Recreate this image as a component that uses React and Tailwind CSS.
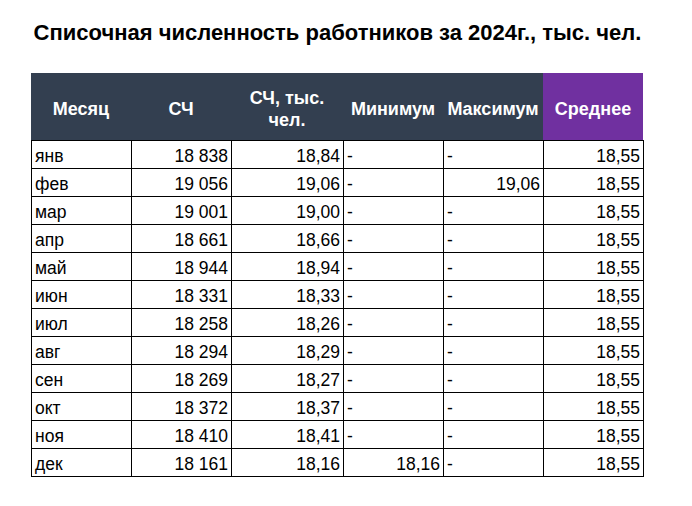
import React from "react";

const rows = [
  ["янв", "18 838", "18,84", null, null],
  ["фев", "19 056", "19,06", null, "19,06"],
  ["мар", "19 001", "19,00", null, null],
  ["апр", "18 661", "18,66", null, null],
  ["май", "18 944", "18,94", null, null],
  ["июн", "18 331", "18,33", null, null],
  ["июл", "18 258", "18,26", null, null],
  ["авг", "18 294", "18,29", null, null],
  ["сен", "18 269", "18,27", null, null],
  ["окт", "18 372", "18,37", null, null],
  ["ноя", "18 410", "18,41", null, null],
  ["дек", "18 161", "18,16", "18,16", null],
];

const cols = "grid grid-cols-[100px_100px_112px_100px_100px_100px]";

function Cell({ children, right }) {
  return (
    <div
      className={
        "h-[28px] border-r border-b border-black flex items-center pt-[2px] px-[3px] " +
        (right ? "justify-end" : "justify-start")
      }
    >
      {children}
    </div>
  );
}

function Val({ v }) {
  return v ? <Cell right>{v}</Cell> : <Cell>-</Cell>;
}

export default function App() {
  return (
    <div
      className="w-[692px] h-[506px] bg-white text-black"
      style={{ fontFamily: '"Liberation Sans", Arial, sans-serif' }}
    >
      <div className="pl-[31px] pt-[19px]">
        <div className="w-[613px] text-center font-bold text-[22px] leading-[28px] whitespace-nowrap">
          Списочная численность работников за 2024г., тыс. чел.
        </div>
        <div className="mt-[26px] w-[613px]">
          <div className={cols + " h-[67px] text-white font-bold text-[18px] leading-[22px]"}>
            <div className="bg-[#333f50] flex items-center justify-center pt-[4px]">Месяц</div>
            <div className="bg-[#333f50] flex items-center justify-center pt-[4px]">СЧ</div>
            <div className="bg-[#333f50] flex items-center justify-center text-center pt-[4px]">
              СЧ, тыс.
              <br />
              чел.
            </div>
            <div className="bg-[#333f50] flex items-center justify-center pt-[4px]">Минимум</div>
            <div className="bg-[#333f50] flex items-center justify-center pt-[4px]">Максимум</div>
            <div className="bg-[#7030a0] flex items-center justify-center pt-[4px]">Среднее</div>
          </div>
          <div className={cols + " border-l border-t border-black text-[17.5px] leading-[20px] w-[613px]"}>
            {rows.map((r) => (
              <React.Fragment key={r[0]}>
                <Cell>{r[0]}</Cell>
                <Cell right>{r[1]}</Cell>
                <Cell right>{r[2]}</Cell>
                <Val v={r[3]} />
                <Val v={r[4]} />
                <Cell right>18,55</Cell>
              </React.Fragment>
            ))}
          </div>
        </div>
      </div>
    </div>
  );
}
